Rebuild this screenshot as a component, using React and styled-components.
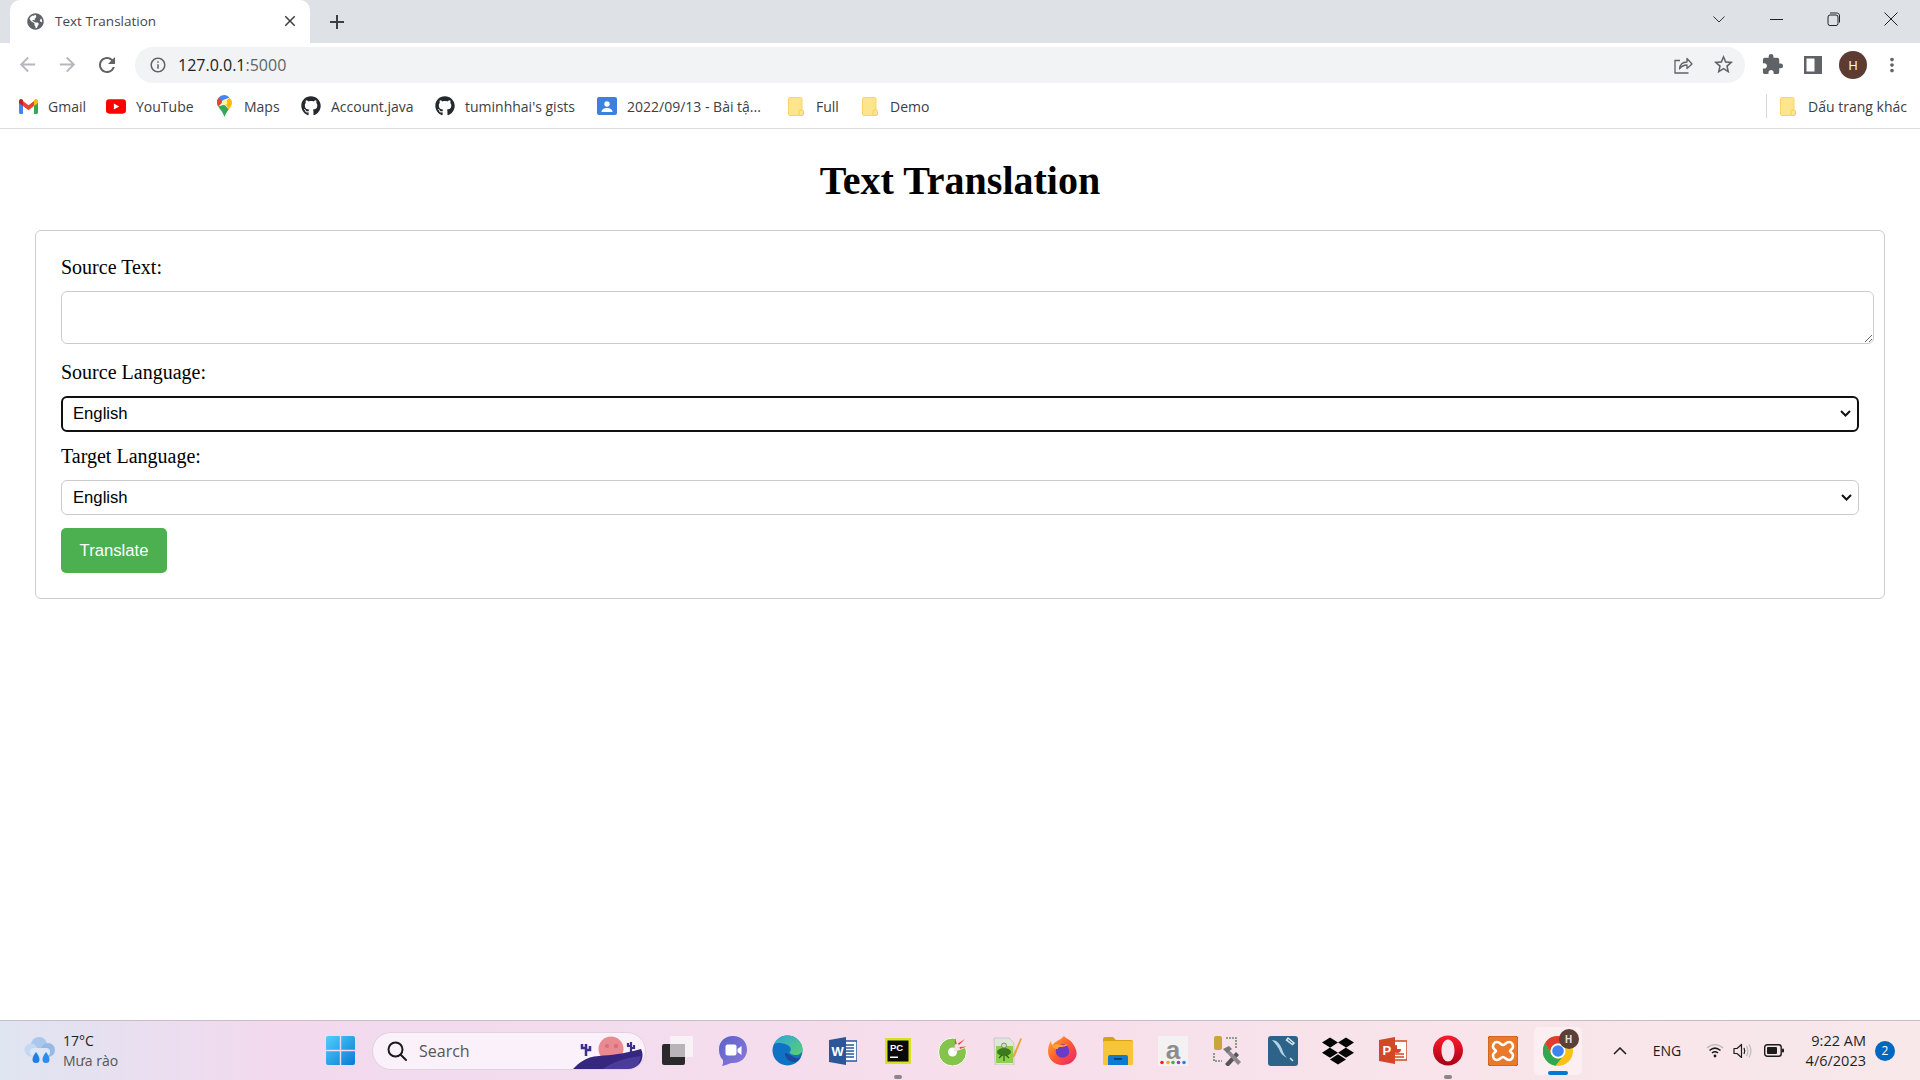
import styled, { createGlobalStyle } from "styled-components";
import { FaDropbox, FaGithub, FaGlobeAmericas } from "react-icons/fa";
import {
  MdAdd,
  MdArrowBack,
  MdArrowForward,
  MdClose,
  MdExtension,
  MdInfoOutline,
  MdMoreVert,
  MdRefresh,
  MdStarBorder,
} from "react-icons/md";

const UI_FONT = `"Open Sans", "Noto Sans", sans-serif`;
const LANGUAGES = ["English", "Vietnamese", "French", "German", "Japanese"];
const CHEVRON = `url("data:image/svg+xml,%3Csvg xmlns='http://www.w3.org/2000/svg' width='11' height='7' viewBox='0 0 11 7'%3E%3Cpath d='M1 1l4.500 4.500L10 1' fill='none' stroke='%23111' stroke-width='2'/%3E%3C/svg%3E")`;

const GlobalStyle = createGlobalStyle`
  html, body {
    margin: 0;
    padding: 0;
    height: 100%;
    overflow: hidden;
    background: white;
  }
`;

// small drawings

function GmailIcon() {
  return (
    <svg width="19" height="15" viewBox="0 0 19 15">
      <path d="M0 2v11.500c0 .8.6 1.500 1.400 1.500H4V6z" fill="#4285f4" />
      <path d="M19 2v11.500c0 .8-.6 1.500-1.400 1.500H15V6z" fill="#34a853" />
      <path d="M4 7V2l5.500 4.200L15 2v5l-5.500 4.200z" fill="#ea4335" />
      <path d="M0 2c0-1.700 2-2.600 3.200-1.600L4 1v6L0 4z" fill="#c5221f" />
      <path d="M19 2c0-1.700-2-2.600-3.200-1.600L15 1v6l4-3z" fill="#fbbc04" />
    </svg>
  );
}

function YoutubeIcon() {
  return (
    <svg width="21" height="15" viewBox="0 0 21 15">
      <rect width="21" height="15" rx="3.500" fill="#f00" />
      <path d="M8.300 4.300v6.400l5.500-3.200z" fill="white" />
    </svg>
  );
}

function MapsIcon() {
  return (
    <svg width="15" height="22" viewBox="0 0 15 22">
      <path d="M7.500 0C3.300 0 0 3.300 0 7.500c0 1.500.5 2.800 1.200 4l6.300-7 4.800-1.800C11 1 9.400 0 7.500 0z" fill="#4285f4" />
      <path d="M1.200 11.500C3 14.500 6 17 7.500 22c1-3.300 2.800-5.500 4.200-7.500L7.500 9.500z" fill="#34a853" />
      <path d="M12.300 2.700L7.500 7.500l4.200 7C13.400 12.300 15 10.300 15 7.500c0-1.900-1-3.600-2.700-4.800z" fill="#fbbc04" />
      <path d="M2 2.500C.8 3.800 0 5.500 0 7.500c0 1.500.5 2.800 1.200 4L6 7z" fill="#ea4335" />
      <circle cx="7.500" cy="7.500" r="2.700" fill="#fff59d" />
    </svg>
  );
}

function ContactIcon() {
  return (
    <svg width="20" height="18" viewBox="0 0 20 18">
      <rect width="20" height="18" rx="2" fill="#3f7fe0" />
      <circle cx="10" cy="7" r="2.700" fill="white" />
      <path d="M4.500 15c0-2.800 3-4 5.500-4s5.500 1.200 5.500 4z" fill="white" />
    </svg>
  );
}

function FolderIcon() {
  return (
    <svg width="16" height="19" viewBox="0 0 16 19">
      <rect x=".5" y=".5" width="13.500" height="18" rx="1.500" fill="#fde58d" stroke="#f8d568" />
      <rect x="11" y="13" width="4.500" height="5.500" rx="1.500" fill="#fde58d" stroke="#f6cf5a" />
    </svg>
  );
}

function ShareIcon() {
  return (
    <svg width="20" height="20" viewBox="0 0 20 20" fill="none" stroke="#5f6368" strokeWidth="1.300">
      <path d="M7 5.500H2v12.500h13.500" />
      <path d="M6.500 14c.5-4.500 3.500-7 7.500-7V3.500l5 5.500-5 4.500v-3.500c-3 0-5.500 1-7.500 4z" strokeLinejoin="round" />
    </svg>
  );
}

function SidePanelIcon() {
  return (
    <svg width="18" height="18" viewBox="0 0 18 18">
      <path d="M0 0h18v18H0zM2.500 2.500v13h8v-13z" fill="#5f6368" fillRule="evenodd" />
    </svg>
  );
}

function RestoreIcon() {
  return (
    <svg width="14" height="14" viewBox="0 0 14 14" fill="none" stroke="#222" strokeWidth="1">
      <rect x="1" y="3" width="10" height="10.500" rx="2" />
      <path d="M3 1h6.500c2 0 3 1 3 3v6.500" />
    </svg>
  );
}

function WeatherIcon() {
  return (
    <svg width="32" height="30" viewBox="0 0 32 30">
      <circle cx="15" cy="9" r="8" fill="#a9c7ec" />
      <circle cx="7" cy="14" r="6.500" fill="#c4d8f2" />
      <circle cx="24" cy="14" r="7" fill="#97b9e6" />
      <rect x="6" y="12" width="20" height="8" rx="4" fill="#dbe7f7" />
      <path d="M12 16c2 3 3.500 5 3.500 7.500a3.500 3.500 0 0 1-7 0C8.500 21 10.500 18 12 16z" fill="#1f7fe8" />
      <path d="M22 16c2 3 3.500 5 3.500 7.500a3.500 3.500 0 0 1-7 0C18.500 21 20.500 18 22 16z" fill="#2b8cf0" />
    </svg>
  );
}

function StartIcon() {
  return (
    <svg width="29" height="29" viewBox="0 0 29 29">
      <defs>
        <linearGradient id="winA" x1="0" y1="0" x2="1" y2="1">
          <stop offset="0" stopColor="#4fd0fb" />
          <stop offset="1" stopColor="#0c79d4" />
        </linearGradient>
      </defs>
      <path d="M0 2a2 2 0 0 1 2-2h11.800v13.800H0zM15.200 0H27a2 2 0 0 1 2 2v11.800H15.200zM0 15.200h13.800V29H2a2 2 0 0 1-2-2zM15.200 15.200H29V27a2 2 0 0 1-2 2H15.200z" fill="url(#winA)" />
    </svg>
  );
}

function SearchArt() {
  return (
    <svg width="72" height="34" viewBox="0 0 72 34">
      <circle cx="38" cy="14" r="12.500" fill="#e98a92" />
      <circle cx="34" cy="11" r="2" fill="#d56f7a" />
      <circle cx="43" cy="11" r="2.200" fill="#d56f7a" />
      <path d="M13 9v12M13 13h-4v-4M13 15h4v-4" stroke="#3f2f8c" strokeWidth="2.500" fill="none" />
      <path d="M58 7v11M58 11h-3v-3M58 13h3v-3" stroke="#3f2f8c" strokeWidth="2.200" fill="none" />
      <path d="M0 34c6-6 12-12 26-13 12-1 24-2 42-7 4 7 0 16-7 20z" fill="#35267f" />
      <path d="M30 34c8-6 20-11 38-13-1 5-3 10-7 13z" fill="#5546a8" opacity=".7" />
    </svg>
  );
}

function SearchGlass() {
  return (
    <svg width="22" height="22" viewBox="0 0 22 22" fill="none" stroke="#1b1b1b" strokeWidth="2">
      <circle cx="9.500" cy="9.500" r="7" />
      <path d="M14.700 14.700L20 20" strokeLinecap="round" />
    </svg>
  );
}

function TaskViewIcon() {
  return (
    <svg width="32" height="30" viewBox="0 0 32 30">
      <rect x="0" y="8" width="23" height="21" rx="2" fill="#2a2a2a" />
      <rect x="8" y="0" width="23" height="21" rx="1" fill="#f8f4f6" opacity=".85" />
      <rect x="8" y="8" width="15" height="13" fill="#b9b5b7" />
    </svg>
  );
}

function TeamsIcon() {
  return (
    <svg width="30" height="30" viewBox="0 0 30 30">
      <defs>
        <linearGradient id="teamsA" x1="0" y1="0" x2="1" y2="1">
          <stop offset="0" stopColor="#5a62c8" />
          <stop offset="1" stopColor="#8d78dc" />
        </linearGradient>
      </defs>
      <path d="M15 0c8.300 0 14 5.500 14 13.500S23.300 27 15 27c-3 0-5 1.500-11 3 1.500-3 1.500-5 .5-6.500C2 21 1 17.500 1 13.500 1 5.500 6.700 0 15 0z" fill="url(#teamsA)" />
      <rect x="7.500" y="8.500" width="11" height="11" rx="2" fill="white" />
      <path d="M19.500 13l4-3v9l-4-3z" fill="white" />
    </svg>
  );
}

function EdgeIcon() {
  return (
    <svg width="31" height="31" viewBox="0 0 31 31">
      <defs>
        <linearGradient id="edgeA" x1="0" y1="0" x2="1" y2="1">
          <stop offset="0" stopColor="#2fa5dd" />
          <stop offset="1" stopColor="#5cd16b" />
        </linearGradient>
      </defs>
      <circle cx="15.500" cy="15.500" r="15" fill="#0f72c4" />
      <path d="M2 9C5 3 10 .5 15.500 .5 24 .5 30.500 7 30.500 14c0 4-3 6-7 6-3 0-6-1-6-3 2-1 2-5-2-7C9 7 4 8 2 9z" fill="url(#edgeA)" />
      <path d="M13 18c0 5 4 9 9 9 3 0 5-2 7-5-3 2-6 1-9-1-3-1-5-3-7-3z" fill="#1b4a9c" />
    </svg>
  );
}

function WordIcon() {
  return (
    <svg width="28" height="28" viewBox="0 0 28 28">
      <rect x="11" y="4" width="17" height="20" fill="white" stroke="#2b579a" strokeWidth="1.500" />
      <path d="M15 8h10M15 11h10M15 14h10M15 17h10M15 20h10" stroke="#2b579a" strokeWidth="1.500" />
      <path d="M0 3l17-3v28L0 25z" fill="#2b579a" />
      <text x="2.500" y="18.500" fontFamily="Liberation Sans, sans-serif" fontWeight="700" fontSize="13" fill="white">W</text>
    </svg>
  );
}

function PyCharmIcon() {
  return (
    <svg width="26" height="26" viewBox="0 0 26 26">
      <rect width="26" height="26" fill="#d8e21e" />
      <rect x="2.500" y="2.500" width="21" height="21" fill="#0a0a0a" />
      <text x="5" y="13" fontFamily="Liberation Sans, sans-serif" fontWeight="700" fontSize="9.500" fill="white">PC</text>
      <rect x="5" y="18.500" width="8" height="1.500" fill="white" />
    </svg>
  );
}

function CocCocIcon() {
  return (
    <svg width="30" height="30" viewBox="0 0 30 30">
      <circle cx="14.500" cy="16" r="14" fill="#85c44c" stroke="white" strokeWidth="1" />
      <circle cx="14.500" cy="16" r="4.500" fill="white" />
      <path d="M18 0h12v11L16 16z" fill="#f6dfe9" />
      <path d="M17 1.500l1.800 6.500-2 .5zM27 3l-6 6-1.200-1.500zM28.500 10.500l-6.500 2.500-.5-2z" fill="#ea4c2f" />
    </svg>
  );
}

function NotepadIcon() {
  return (
    <svg width="29" height="28" viewBox="0 0 29 28">
      <path d="M1 1h15l5 5v22H2z" fill="#dfe8d6" stroke="#aab" strokeWidth=".5" />
      <rect x="3" y="9" width="17" height="17" fill="#8ed04b" />
      <ellipse cx="11" cy="15" rx="7" ry="4" fill="#3c7a1e" />
      <circle cx="11" cy="8.500" r="2.500" fill="#cde0c0" stroke="#666" strokeWidth=".7" />
      <path d="M6 21l3-3M16 21l-3-3M11 24v-5" stroke="#2d5c12" strokeWidth="1.200" />
      <path d="M20 18L27.500 1l1.500.8L22 19l-2.500 2z" fill="#e5a636" />
    </svg>
  );
}

function FirefoxIcon() {
  return (
    <svg width="29" height="29" viewBox="0 0 29 29">
      <defs>
        <linearGradient id="ffA" x1="0" y1="0" x2="1" y2="1">
          <stop offset="0" stopColor="#ffb52b" />
          <stop offset=".5" stopColor="#ff5a2f" />
          <stop offset="1" stopColor="#e81e72" />
        </linearGradient>
      </defs>
      <path d="M16 0c2 3 6 3 9 8 3 4 4 8 3.500 11C27 25 22 29 14.500 29 6 29 0 23 0 15 0 11 1.500 7 3 5c0 2 .5 3 1.500 4C7 5 13 4 16 0z" fill="url(#ffA)" />
      <circle cx="14.500" cy="15" r="6.800" fill="#6a3bc7" />
      <path d="M4 10c3-2 6-2 10-1 2 .5 4 0 6-1-1 2-4 3-7 3-3 0-3 1-3 2-3 0-5-1-6-3z" fill="#ffa436" />
    </svg>
  );
}

function ExplorerIcon() {
  return (
    <svg width="30" height="28" viewBox="0 0 30 28">
      <path d="M0 2a2 2 0 0 1 2-2h8l3 3h15a2 2 0 0 1 2 2v3H0z" fill="#d9a10f" />
      <rect x="0" y="4" width="30" height="24" rx="1.500" fill="#f7c53a" />
      <path d="M5 28v-8a2 2 0 0 1 2-2h16a2 2 0 0 1 2 2v8z" fill="#0d7bd1" />
      <rect x="11" y="21" width="8" height="1.800" fill="#073d70" />
    </svg>
  );
}

function AmazonIcon() {
  return (
    <svg width="30" height="30" viewBox="0 0 30 30">
      <rect width="30" height="30" fill="#f3f1f2" />
      <text x="15" y="23" textAnchor="middle" fontFamily="Liberation Sans, sans-serif" fontWeight="700" fontSize="26" fill="#8d8d8d">a</text>
      <circle cx="4" cy="26.500" r="1.800" fill="#e8262b" />
      <circle cx="10" cy="26.500" r="1.800" fill="#f5a623" />
      <circle cx="15" cy="26.500" r="1.800" fill="#3cb44b" />
      <circle cx="20.500" cy="26.500" r="1.800" fill="#8e44ad" />
      <circle cx="26" cy="26.500" r="1.800" fill="#2584e4" />
    </svg>
  );
}

function WorkbenchIcon() {
  return (
    <svg width="30" height="30" viewBox="0 0 30 30">
      <rect x="1" y="0" width="8" height="14" rx="2" fill="#c9a53b" />
      <path d="M13 2h10v10M1 17v8h8" stroke="#6f8a6a" strokeWidth="1.600" strokeDasharray="2 1" fill="none" />
      <path d="M12 28l11-12 3 3-11 12z" fill="#555" />
      <path d="M25 29L13 16l2-3 13 13z" fill="#8a8a8a" />
      <path d="M10 13l6-3 3 3-5 4z" fill="#777" />
    </svg>
  );
}

function MysqlIcon() {
  return (
    <svg width="30" height="30" viewBox="0 0 30 30">
      <rect width="30" height="30" rx="3" fill="#2d6389" />
      <path d="M4 4c5 0 8 4 10 9 1 4 3 7 5 9-4-2-7-5-8-9-2-3-4-6-7-9z" fill="#b5d3e5" />
      <path d="M20 2l6 5-1.500 1.500L18.500 4zM22 22l3 3" stroke="#dbe8f0" strokeWidth="1.500" fill="none" />
    </svg>
  );
}

function PowerPointIcon() {
  return (
    <svg width="28" height="27" viewBox="0 0 28 27">
      <rect x="12" y="4" width="16" height="19" fill="white" stroke="#d24726" strokeWidth="1.500" />
      <path d="M18 8a4 4 0 1 0 4 4h-4z" fill="#d24726" />
      <path d="M16 17h9M16 20h9" stroke="#d24726" strokeWidth="1.500" />
      <path d="M0 3l16-3v27L0 24z" fill="#d24726" />
      <text x="3.500" y="18" fontFamily="Liberation Sans, sans-serif" fontWeight="700" fontSize="13" fill="white">P</text>
    </svg>
  );
}

function OperaIcon() {
  return (
    <svg width="30" height="31" viewBox="0 0 30 31">
      <defs>
        <linearGradient id="opA" x1="0" y1="0" x2="0" y2="1">
          <stop offset="0" stopColor="#ff1b2d" />
          <stop offset="1" stopColor="#a70014" />
        </linearGradient>
      </defs>
      <path d="M15 .500c8.300 0 15 6.700 15 15s-6.700 15-15 15-15-6.700-15-15 6.700-15 15-15zm0 4c-4 0-6.500 5-6.500 11s2.500 11 6.500 11 6.500-5 6.500-11-2.500-11-6.500-11z" fill="url(#opA)" fillRule="evenodd" />
    </svg>
  );
}

function XamppIcon() {
  return (
    <svg width="30" height="30" viewBox="0 0 30 30">
      <rect width="30" height="30" rx="3" fill="#ea7a2a" stroke="#b9591a" />
      <path d="M9 6c3 0 4 3 6 3s3-3 6-3 4 3 4 5-3 3-3 4 3 2 3 4-1 5-4 5-4-3-6-3-3 3-6 3-4-3-4-5 3-3 3-4-3-2-3-4 1-5 4-5z" fill="none" stroke="white" strokeWidth="2.600" />
    </svg>
  );
}

function ChromeIcon() {
  return (
    <svg width="30" height="30" viewBox="0 0 30 30">
      <circle cx="15" cy="15" r="15" fill="#fbc116" />
      <path d="M15 0a15 15 0 0 1 13 7.500H15a7.500 7.500 0 0 0-6.500 11.200L2 7A15 15 0 0 1 15 0z" fill="#e33b2e" />
      <path d="M2 7l6.500 11.700A7.500 7.500 0 0 0 19 21.500L12.500 29.800A15 15 0 0 1 2 7z" fill="#2fa84f" />
      <circle cx="15" cy="15" r="7.500" fill="white" />
      <circle cx="15" cy="15" r="5.800" fill="#3f83f0" />
    </svg>
  );
}

function CaretIcon() {
  return (
    <svg width="14" height="8" viewBox="0 0 14 8" fill="none" stroke="#1b1b1b" strokeWidth="1.500">
      <path d="M1 7l6-6 6 6" />
    </svg>
  );
}

function WifiIcon() {
  return (
    <svg width="18" height="15" viewBox="0 0 18 15" fill="none" strokeWidth="1.500">
      <path d="M1 5c5-4.500 11-4.500 16 0" stroke="#bbb" />
      <path d="M3.500 7.500c3.500-3 7.500-3 11 0M6 10c2-1.700 4-1.700 6 0" stroke="#1b1b1b" />
      <circle cx="9" cy="13" r="1.400" fill="#1b1b1b" stroke="none" />
    </svg>
  );
}

function SoundIcon() {
  return (
    <svg width="20" height="16" viewBox="0 0 20 16" fill="none" strokeWidth="1.200">
      <path d="M1 5.500h3L8.500 1.500v13L4 10.500H1z" stroke="#1b1b1b" strokeLinejoin="round" />
      <path d="M11 5c1 2 1 4 0 6" stroke="#1b1b1b" />
      <path d="M13.500 3c1.700 3 1.700 7 0 10M16 1.500c2.400 4 2.400 9 0 13" stroke="#bbb" />
    </svg>
  );
}

function BatteryIcon() {
  return (
    <svg width="20" height="13" viewBox="0 0 20 13">
      <rect x=".7" y=".7" width="16.500" height="11.600" rx="2.500" fill="none" stroke="#1b1b1b" strokeWidth="1.400" />
      <rect x="3" y="3" width="10" height="7" rx="1" fill="#1b1b1b" />
      <rect x="18" y="4.500" width="2" height="4" rx="1" fill="#1b1b1b" />
    </svg>
  );
}

const BOOKMARKS = [
  { icon: <GmailIcon />, label: "Gmail", width: 88 },
  { icon: <YoutubeIcon />, label: "YouTube", width: 108 },
  { icon: <MapsIcon />, label: "Maps", width: 87 },
  { icon: <FaGithub size={20} color="#24292e" />, label: "Account.java", width: 134 },
  { icon: <FaGithub size={20} color="#24292e" />, label: "tuminhhai's gists", width: 162 },
  { icon: <ContactIcon />, label: "2022/09/13 - Bài tậ...", width: 189 },
  { icon: <FolderIcon />, label: "Full", width: 74 },
  { icon: <FolderIcon />, label: "Demo", width: 80 },
];

const TASK_ICONS = [
  { icon: <TaskViewIcon /> },
  { icon: <TeamsIcon /> },
  { icon: <EdgeIcon /> },
  { icon: <WordIcon /> },
  { icon: <PyCharmIcon />, running: true },
  { icon: <CocCocIcon /> },
  { icon: <NotepadIcon /> },
  { icon: <FirefoxIcon /> },
  { icon: <ExplorerIcon /> },
  { icon: <AmazonIcon /> },
  { icon: <WorkbenchIcon /> },
  { icon: <MysqlIcon /> },
  { icon: <FaDropbox size={32} color="#050505" /> },
  { icon: <PowerPointIcon /> },
  { icon: <OperaIcon />, running: true },
  { icon: <XamppIcon /> },
];

export default function App() {
  return (
    <Screen>
      <GlobalStyle />
      <TabStrip>
        <Tab>
          <FaGlobeAmericas size={17} color="#5f6368" />
          <TabTitle>Text Translation</TabTitle>
          <MdClose size={18} color="#3c4043" />
        </Tab>
        <NewTab>
          <MdAdd size={24} color="#3c4043" />
        </NewTab>
        <WindowButtons>
          <WindowButton $width={58}>
            <svg width="12" height="7" viewBox="0 0 12 7" fill="none" stroke="#333" strokeWidth="1">
              <path d="M.5.500L6 6l5.500-5.500" />
            </svg>
          </WindowButton>
          <WindowButton $width={57}>
            <svg width="13" height="1" viewBox="0 0 13 1">
              <rect width="13" height="1" fill="#222" />
            </svg>
          </WindowButton>
          <WindowButton $width={57}>
            <RestoreIcon />
          </WindowButton>
          <WindowButton $width={58}>
            <svg width="14" height="14" viewBox="0 0 14 14" stroke="#222" strokeWidth="1">
              <path d="M.5.500l13 13M13.500.500l-13 13" />
            </svg>
          </WindowButton>
        </WindowButtons>
      </TabStrip>

      <Toolbar>
        <NavButton><MdArrowBack size={23} color="#b5b8bc" /></NavButton>
        <NavButton><MdArrowForward size={23} color="#b5b8bc" /></NavButton>
        <NavButton><MdRefresh size={24} color="#5f6368" /></NavButton>
        <Omnibox>
          <MdInfoOutline size={18} color="#5f6368" />
          <Url>127.0.0.1<UrlPort>:5000</UrlPort></Url>
          <OmniboxEnd>
            <ShareIcon />
            <MdStarBorder size={23} color="#5f6368" />
          </OmniboxEnd>
        </Omnibox>
        <ToolbarEnd>
          <MdExtension size={23} color="#5f6368" />
          <SidePanelIcon />
          <Avatar>H</Avatar>
          <MdMoreVert size={22} color="#5f6368" />
        </ToolbarEnd>
      </Toolbar>

      <BookmarkBar>
        {BOOKMARKS.map((b) => (
          <Bookmark key={b.label} $width={b.width}>
            <BookmarkIcon>{b.icon}</BookmarkIcon>
            {b.label}
          </Bookmark>
        ))}
        <OtherBookmarks>
          <FolderIcon />
          Dấu trang khác
        </OtherBookmarks>
      </BookmarkBar>

      <Main>
        <Heading>Text Translation</Heading>
        <Panel>
          <Label>Source Text:</Label>
          <SourceArea />
          <Label>Source Language:</Label>
          <LanguageSelect $focused defaultValue="English">
            {LANGUAGES.map((l) => <option key={l}>{l}</option>)}
          </LanguageSelect>
          <Label>Target Language:</Label>
          <LanguageSelect defaultValue="English">
            {LANGUAGES.map((l) => <option key={l}>{l}</option>)}
          </LanguageSelect>
          <TranslateButton>Translate</TranslateButton>
        </Panel>
      </Main>

      <Taskbar>
        <Weather>
          <WeatherIcon />
          <WeatherText>
            <Temperature>17°C</Temperature>
            <Condition>Mưa rào</Condition>
          </WeatherText>
        </Weather>
        <StartButton><StartIcon /></StartButton>
        <SearchBox>
          <SearchGlass />
          <SearchLabel>Search</SearchLabel>
          <SearchArtSlot><SearchArt /></SearchArtSlot>
        </SearchBox>
        <TaskIcons>
          {TASK_ICONS.map((t, i) => (
            <TaskSlot key={i}>
              {t.icon}
              {t.running && <RunningDot />}
            </TaskSlot>
          ))}
          <ActiveTaskSlot>
            <ChromeIcon />
            <ChromeBadge>H</ChromeBadge>
            <ActiveBar />
          </ActiveTaskSlot>
        </TaskIcons>
        <Tray>
          <TraySlot $width={63}><CaretIcon /></TraySlot>
          <TraySlot $width={28} $left={2}>ENG</TraySlot>
          <TraySlot $width={30} $left={19}><WifiIcon /></TraySlot>
          <TraySlot $width={26}><SoundIcon /></TraySlot>
          <TraySlot $width={36}><BatteryIcon /></TraySlot>
          <Clock>
            <span>9:22 AM</span>
            <span>4/6/2023</span>
          </Clock>
          <NotifyBadge>2</NotifyBadge>
        </Tray>
      </Taskbar>
    </Screen>
  );
}

const Screen = styled.div`
  display: flex;
  flex-direction: column;
  width: 1920px;
  height: 1080px;
  overflow: hidden;
  background: white;
`;

const TabStrip = styled.div`
  display: flex;
  align-items: flex-end;
  height: 43px;
  flex: none;
  padding-left: 10px;
  background: #dee1e6;
`;

const Tab = styled.div`
  display: flex;
  align-items: center;
  width: 300px;
  height: 43px;
  box-sizing: border-box;
  padding: 0 11px 1px 17px;
  border-radius: 10px 10px 0 0;
  background: white;
`;

const TabTitle = styled.span`
  flex: 1;
  margin-left: 11px;
  color: #45474a;
  font-family: ${UI_FONT};
  font-size: 13.500px;
`;

const NewTab = styled.div`
  display: flex;
  align-items: center;
  justify-content: center;
  width: 28px;
  height: 28px;
  margin: 0 0 7px 13px;
`;

const WindowButtons = styled.div`
  display: flex;
  align-self: flex-start;
  margin-left: auto;
`;

const WindowButton = styled.div`
  display: flex;
  align-items: center;
  justify-content: center;
  width: ${(p) => p.$width}px;
  height: 38px;
`;

const Toolbar = styled.div`
  display: flex;
  align-items: center;
  height: 43px;
  flex: none;
  box-sizing: border-box;
  padding: 0 0 0 7px;
  background: white;
`;

const NavButton = styled.div`
  display: flex;
  align-items: center;
  justify-content: center;
  width: 40px;
  height: 36px;
`;

const Omnibox = styled.div`
  display: flex;
  align-items: center;
  width: 1610px;
  height: 36px;
  margin-left: 8px;
  box-sizing: border-box;
  padding: 0 10px 0 14px;
  border-radius: 18px;
  background: #f1f3f4;
`;

const Url = styled.span`
  margin-left: 11px;
  color: #202124;
  font-family: ${UI_FONT};
  font-size: 16px;
`;

const UrlPort = styled.span`
  color: #5f6368;
`;

const OmniboxEnd = styled.div`
  display: flex;
  align-items: center;
  gap: 19px;
  margin-left: auto;
`;

const ToolbarEnd = styled.div`
  display: flex;
  align-items: center;
  gap: 20px;
  margin-left: 16px;
`;

const Avatar = styled.div`
  display: flex;
  align-items: center;
  justify-content: center;
  width: 28px;
  height: 28px;
  margin: 0 -6px 0 -3px;
  border-radius: 50%;
  color: white;
  background: #5d3b32;
  font-family: ${UI_FONT};
  font-size: 13px;
`;

const BookmarkBar = styled.div`
  display: flex;
  align-items: center;
  height: 43px;
  flex: none;
  box-sizing: border-box;
  padding: 0 13px 2px 18px;
  border-bottom: 1px solid #dadce0;
  background: white;
`;

const Bookmark = styled.div`
  display: flex;
  align-items: center;
  flex: none;
  width: ${(p) => p.$width}px;
  color: #3c4043;
  font-family: ${UI_FONT};
  font-size: 14px;
  white-space: nowrap;
`;

const BookmarkIcon = styled.span`
  display: flex;
  flex: none;
  align-items: center;
  justify-content: center;
  width: 20px;
  margin-right: 10px;
`;

const OtherBookmarks = styled.div`
  display: flex;
  align-items: center;
  gap: 12px;
  height: 24px;
  margin-left: auto;
  padding-left: 13px;
  border-left: 1px solid #d4d6d9;
  color: #3c4043;
  font-family: ${UI_FONT};
  font-size: 14px;
  white-space: nowrap;
`;

const Main = styled.main`
  flex: 1;
  min-height: 0;
  box-sizing: border-box;
  padding: 29px 35px 0;
  font-family: "Liberation Serif", "Times New Roman", serif;
`;

const Heading = styled.h1`
  margin: 0 0 27px;
  color: black;
  font-size: 40px;
  font-weight: 700;
  line-height: 45px;
  text-align: center;
`;

const Panel = styled.div`
  box-sizing: border-box;
  width: 1850px;
  height: 369px;
  padding: 25px 10px 0 25px;
  border: 1.500px solid #ccc;
  border-radius: 6px;
`;

const Label = styled.label`
  display: block;
  height: 23px;
  margin-bottom: 12px;
  color: black;
  font-size: 20px;
  line-height: 23px;
`;

const SourceArea = styled.textarea`
  display: block;
  box-sizing: border-box;
  width: 1813px;
  height: 53px;
  margin: 0 0 17px;
  padding: 10px;
  border: 1.500px solid #ccc;
  border-radius: 6px;
  outline: none;
  background: white;
`;

const LanguageSelect = styled.select`
  appearance: none;
  display: block;
  box-sizing: border-box;
  width: 1798px;
  height: 35.500px;
  margin: 0.500px 0 13px;
  padding: 0 ${(p) => (p.$focused ? "10px" : "11px")};
  border: ${(p) => (p.$focused ? "2.500px solid #101010" : "1.500px solid #ccc")};
  border-radius: 6px;
  outline: none;
  color: black;
  background: white ${CHEVRON} no-repeat right 6px center;
  font-family: "Liberation Sans", Arial, sans-serif;
  font-size: 16.670px;
`;

const TranslateButton = styled.button`
  display: block;
  width: 106px;
  height: 45px;
  padding: 0;
  border: none;
  border-radius: 5px;
  color: white;
  background: #4caf50;
  font-family: "Liberation Sans", Arial, sans-serif;
  font-size: 16.670px;
`;

const Taskbar = styled.footer`
  display: flex;
  align-items: center;
  height: 60px;
  flex: none;
  box-sizing: border-box;
  border-top: 1px solid #c9bcc8;
  background: linear-gradient(90deg, #dfe5f1 0%, #f2d9ee 14%, #f3dcee 30%, #f6deeb 50%, #f8e4ea 75%, #f8e8ea 100%);
  font-family: ${UI_FONT};
`;

const Weather = styled.div`
  display: flex;
  flex: none;
  align-items: center;
  gap: 7px;
  width: 322px;
  box-sizing: border-box;
  padding-left: 24px;
`;

const WeatherText = styled.div`
  display: flex;
  flex-direction: column;
  font-size: 14px;
  line-height: 20px;
`;

const Temperature = styled.span`
  color: #1f1f1f;
`;

const Condition = styled.span`
  color: #555;
`;

const StartButton = styled.div`
  display: flex;
  flex: none;
  align-items: center;
  justify-content: center;
  width: 36px;
`;

const SearchBox = styled.div`
  position: relative;
  display: flex;
  flex: none;
  align-items: center;
  width: 274px;
  height: 38px;
  margin-left: 14px;
  box-sizing: border-box;
  padding-left: 13px;
  overflow: hidden;
  border: 1px solid #e2d2e0;
  border-radius: 19px;
  background: #fbf1fa;
`;

const SearchLabel = styled.span`
  margin-left: 11px;
  color: #555;
  font-size: 16px;
`;

const SearchArtSlot = styled.div`
  position: absolute;
  right: 0;
  bottom: 0;
  display: flex;
`;

const TaskIcons = styled.div`
  display: flex;
  flex: none;
  margin-left: 4px;
`;

const TaskSlot = styled.div`
  position: relative;
  display: flex;
  flex: none;
  align-items: center;
  justify-content: center;
  width: 55px;
  height: 48px;
`;

const ActiveTaskSlot = styled(TaskSlot)`
  width: 48px;
  margin: 0 3.500px;
  border-radius: 5px;
  background: #fbeff2;
`;

const RunningDot = styled.span`
  position: absolute;
  left: 50%;
  bottom: -4px;
  width: 8px;
  height: 4px;
  margin-left: -4px;
  border-radius: 2px;
  background: #8a868a;
`;

const ActiveBar = styled.span`
  position: absolute;
  left: 14px;
  bottom: 0;
  width: 20px;
  height: 4px;
  border-radius: 2px;
  background: #0078d4;
`;

const ChromeBadge = styled.span`
  position: absolute;
  top: 2px;
  right: 3px;
  display: flex;
  align-items: center;
  justify-content: center;
  width: 20px;
  height: 20px;
  border-radius: 50%;
  color: #e6dcd8;
  background: #5d3f36;
  font-size: 10px;
  font-weight: 700;
`;

const Tray = styled.div`
  display: flex;
  flex: none;
  align-items: center;
  margin-left: 3px;
  color: #1b1b1b;
`;

const TraySlot = styled.div`
  display: flex;
  flex: none;
  align-items: center;
  justify-content: center;
  width: ${(p) => p.$width}px;
  margin-left: ${(p) => p.$left || 0}px;
  font-size: 14px;
`;

const Clock = styled.div`
  display: flex;
  flex: none;
  flex-direction: column;
  align-items: flex-end;
  width: 74px;
  color: #1f1f1f;
  font-size: 14.500px;
  line-height: 20px;
`;

const NotifyBadge = styled.span`
  display: flex;
  flex: none;
  align-items: center;
  justify-content: center;
  width: 20px;
  height: 20px;
  margin-left: 9px;
  border-radius: 50%;
  color: white;
  background: #0067c0;
  font-size: 12px;
`;
